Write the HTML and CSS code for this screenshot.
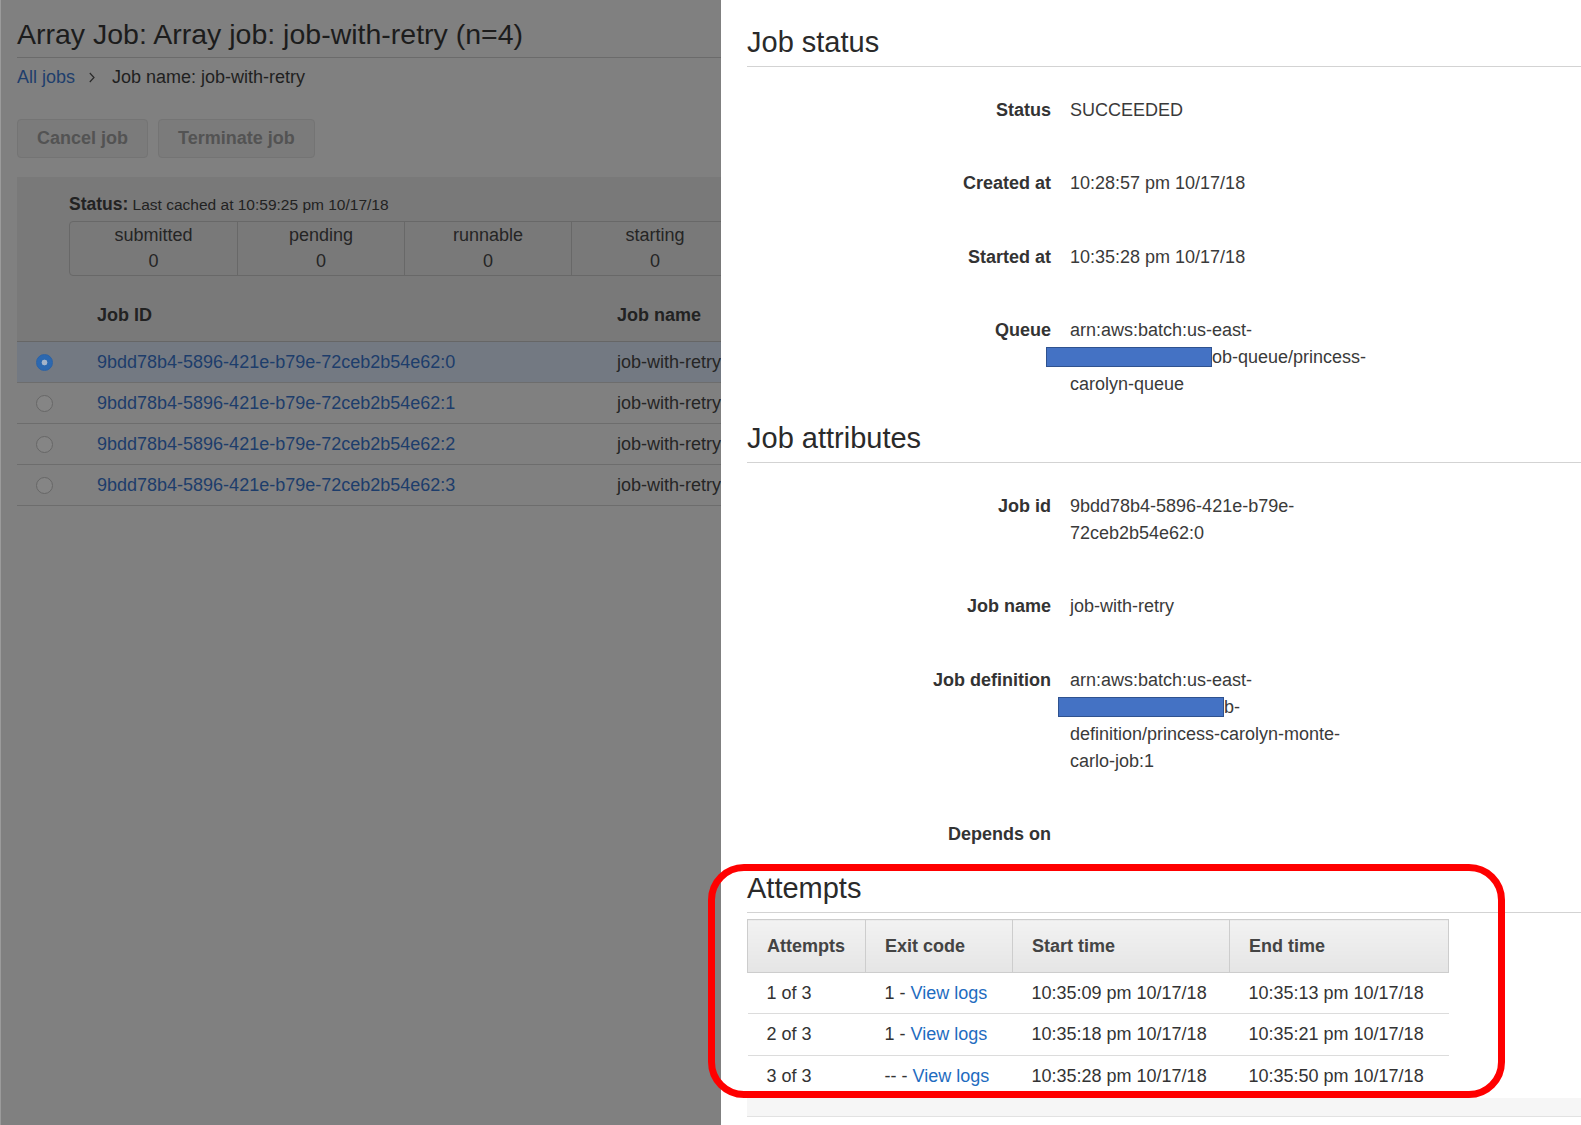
FILE: index.html
```html
<!DOCTYPE html>
<html lang="en">
<head>
<meta charset="utf-8">
<title>Array Job: job-with-retry</title>
<link rel="stylesheet" href="styles.css">
</head>
<body>
<div class="screen">
  <section class="list-pane">
    <div class="list-inner">
      <h1 class="page-title">Array Job: Array job: job-with-retry (n=4)</h1>
      <nav class="crumbs">
        <a class="crumb-link">All jobs</a>
        <svg class="chev" viewBox="0 0 6 11" width="6" height="11"><polyline points="0.8,1 5,5.5 0.8,10" fill="none" stroke="#2a2a2a" stroke-width="1.2"/></svg>
        <span>Job name: job-with-retry</span>
      </nav>
      <div class="actions">
        <button class="btn">Cancel job</button>
        <button class="btn">Terminate job</button>
      </div>
      <div class="status-panel">
        <p class="status-line"><b>Status:</b> Last cached at 10:59:25 pm 10/17/18</p>
        <div class="counts">
          <div class="count"><span>submitted</span><span>0</span></div>
          <div class="count"><span>pending</span><span>0</span></div>
          <div class="count"><span>runnable</span><span>0</span></div>
          <div class="count"><span>starting</span><span>0</span></div>
        </div>
        <div class="jobs-head">
          <span class="c-radio"></span>
          <span class="c-id">Job ID</span>
          <span class="c-name">Job name</span>
        </div>
      </div>
      <div class="job-row selected">
        <span class="c-radio"><span class="radio on"></span></span>
        <span class="c-id"><a class="job-link">9bdd78b4-5896-421e-b79e-72ceb2b54e62:0</a></span>
        <span class="c-name">job-with-retry</span>
      </div>
      <div class="job-row">
        <span class="c-radio"><span class="radio"></span></span>
        <span class="c-id"><a class="job-link">9bdd78b4-5896-421e-b79e-72ceb2b54e62:1</a></span>
        <span class="c-name">job-with-retry</span>
      </div>
      <div class="job-row">
        <span class="c-radio"><span class="radio"></span></span>
        <span class="c-id"><a class="job-link">9bdd78b4-5896-421e-b79e-72ceb2b54e62:2</a></span>
        <span class="c-name">job-with-retry</span>
      </div>
      <div class="job-row">
        <span class="c-radio"><span class="radio"></span></span>
        <span class="c-id"><a class="job-link">9bdd78b4-5896-421e-b79e-72ceb2b54e62:3</a></span>
        <span class="c-name">job-with-retry</span>
      </div>
    </div>
  </section>

  <main class="detail-pane">
    <h2 class="sec-title">Job status</h2>
    <dl class="kv">
      <dt>Status</dt><dd>SUCCEEDED</dd>
      <dt>Created at</dt><dd>10:28:57 pm 10/17/18</dd>
      <dt>Started at</dt><dd>10:35:28 pm 10/17/18</dd>
      <dt>Queue</dt><dd>arn:aws:batch:us-east-<br><span class="redact q"></span>ob-queue/princess-<br>carolyn-queue</dd>
    </dl>

    <h2 class="sec-title">Job attributes</h2>
    <dl class="kv">
      <dt>Job id</dt><dd>9bdd78b4-5896-421e-b79e-<br>72ceb2b54e62:0</dd>
      <dt>Job name</dt><dd>job-with-retry</dd>
      <dt>Job definition</dt><dd>arn:aws:batch:us-east-<br><span class="redact d"></span>b-<br>definition/princess-carolyn-monte-<br>carlo-job:1</dd>
      <dt>Depends on</dt><dd></dd>
    </dl>

    <h2 class="sec-title">Attempts</h2>
    <table class="attempts">
      <colgroup><col class="w1"><col class="w2"><col class="w3"><col class="w4"></colgroup>
      <thead>
        <tr><th>Attempts</th><th>Exit code</th><th>Start time</th><th>End time</th></tr>
      </thead>
      <tbody>
        <tr><td>1 of 3</td><td>1 - <a class="log-link">View logs</a></td><td>10:35:09 pm 10/17/18</td><td>10:35:13 pm 10/17/18</td></tr>
        <tr><td>2 of 3</td><td>1 - <a class="log-link">View logs</a></td><td>10:35:18 pm 10/17/18</td><td>10:35:21 pm 10/17/18</td></tr>
        <tr><td>3 of 3</td><td>-- - <a class="log-link">View logs</a></td><td>10:35:28 pm 10/17/18</td><td>10:35:50 pm 10/17/18</td></tr>
      </tbody>
    </table>
    <div class="after-band"></div>
  </main>

  <div class="callout"></div>
</div>
</body>
</html>
```

FILE: styles.css
```css
* { box-sizing: border-box; }
html, body { margin: 0; padding: 0; }
body {
  font-family: "Liberation Sans", Arial, Helvetica, sans-serif;
  background: #fff;
  overflow: hidden;
}
.screen {
  position: relative;
  display: flex;
  width: 1581px;
  height: 1125px;
  overflow: hidden;
}

/* ---------- dimmed list pane ---------- */
.list-pane {
  flex: 0 0 721px;
  background: #808080;
  overflow: hidden;
  box-shadow: inset 1px 0 0 #9b9b9b;
}
.list-inner {
  width: 1150px;
  padding-left: 17px;
}
.page-title {
  margin: 0;
  padding: 17px 0 6px;
  font-size: 28.5px;
  line-height: 34px;
  font-weight: normal;
  color: #1c1c1c;
  border-bottom: 1px solid #6b6b6b;
}
.crumbs {
  display: flex;
  align-items: center;
  height: 22px;
  margin-top: 8px;
  font-size: 18px;
  color: #1f1f1f;
}
.crumb-link { color: #1e3e6c; }
.chev { margin: 0 17px 0 14px; }
.actions {
  display: flex;
  gap: 10px;
  margin-top: 31px;
}
.btn {
  height: 39px;
  padding: 0 19px;
  font-family: inherit;
  font-size: 18px;
  font-weight: bold;
  color: #535353;
  background: #7b7b7b;
  border: 1px solid #747474;
  border-radius: 4px;
}
.status-panel {
  margin-top: 19px;
  padding-top: 17px;
  background: #797979;
}
.status-line {
  margin: 0 0 0 52px;
  line-height: 20px;
  font-size: 15.5px;
  color: #222;
}
.status-line b { font-size: 17.5px; }
.counts {
  display: flex;
  width: max-content;
  margin: 6px 0 0 52px;
  border: 1px solid #686868;
  border-radius: 4px;
}
.count {
  width: 167px;
  padding-bottom: 1px;
  text-align: center;
  font-size: 18px;
  line-height: 26px;
  color: #252525;
}
.count + .count { border-left: 1px solid #686868; }
.count span { display: block; }
.jobs-head {
  display: flex;
  align-items: center;
  height: 52px;
  margin-top: 14px;
  border-bottom: 1px solid #666;
  font-size: 18px;
  font-weight: bold;
  color: #222;
}
.c-radio { flex: 0 0 80px; display: flex; align-items: center; }
.c-id { flex: 0 0 520px; }
.c-name { flex: 1; }
.job-row {
  display: flex;
  align-items: center;
  height: 41px;
  border-bottom: 1px solid #6d6d6d;
  font-size: 18px;
  color: #252525;
}
.job-row.selected { background: #737982; }
.radio {
  width: 17px;
  height: 17px;
  margin-left: 19px;
  border-radius: 50%;
  border: 1px solid #676767;
  background: #858585;
}
.radio.on {
  border-color: #2a62a6;
  background: radial-gradient(circle, #a3b3c9 0 2.6px, #2c68b0 3.2px);
}
.job-link { color: #1d3d6b; }

/* ---------- detail pane ---------- */
.detail-pane {
  flex: 1;
  min-width: 0;
  padding: 25px 0 0 26px;
  background: #fff;
  color: #333;
}
.sec-title {
  margin: 0;
  padding-bottom: 7px;
  font-size: 29px;
  line-height: 34px;
  font-weight: normal;
  color: #2a2a2a;
  border-bottom: 1px solid #d3d3d3;
}
.kv {
  display: grid;
  grid-template-columns: 304px 1fr;
  column-gap: 19px;
  row-gap: 46.5px;
  margin: 0;
  padding: 29.5px 0 23px;
  font-size: 18px;
  line-height: 27px;
}
.kv dt {
  font-weight: bold;
  text-align: right;
  color: #333;
}
.kv dd {
  margin: 0;
  min-height: 27px;
  color: #3a3a3a;
}
.redact {
  display: inline-block;
  width: 166px;
  height: 20px;
  vertical-align: -4px;
  background: #4472c4;
  border: 1px solid #2f528f;
}
.redact.q { margin-left: -24px; }
.redact.d { margin-left: -12px; }

.attempts {
  width: 701px;
  margin-top: 6px;
  border-collapse: collapse;
  table-layout: fixed;
  font-size: 18px;
}
.w1 { width: 118px; }
.w2 { width: 147px; }
.w3 { width: 217px; }
.w4 { width: 219px; }
.attempts th {
  height: 53px;
  padding: 0 0 0 19px;
  text-align: left;
  font-weight: bold;
  color: #444;
  background: linear-gradient(#f2f2f2, #e5e5e5);
  border: 1px solid #cdcdcd;
}
.attempts td {
  height: 42px;
  padding: 0 0 0 19px;
  color: #333;
  white-space: nowrap;
  border-bottom: 1px solid #dcdcdc;
}
.attempts tbody tr:first-child td { height: 41px; }
.attempts tbody tr:last-child td { border-bottom: none; }
.log-link { color: #1f6cc0; }
.after-band {
  height: 19px;
  background: #f6f6f6;
  border-bottom: 1px solid #e2e2e2;
}

/* ---------- annotation ---------- */
.callout {
  position: absolute;
  left: 708px;
  top: 864px;
  width: 797px;
  height: 234px;
  border: 7px solid #ff0000;
  border-radius: 36px;
  pointer-events: none;
}
```
